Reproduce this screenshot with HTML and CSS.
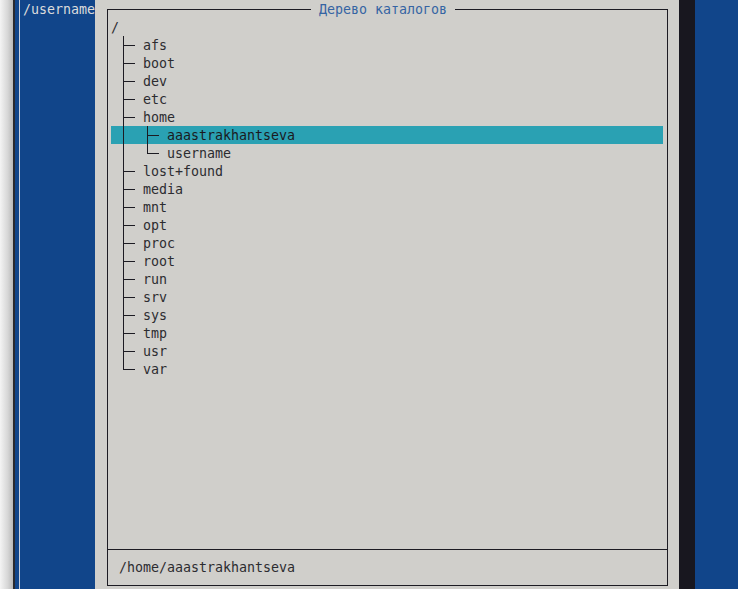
FILE: index.html
```html
<!DOCTYPE html>
<html lang="ru">
<head>
<meta charset="utf-8">
<title>Дерево каталогов</title>
<link rel="stylesheet" href="styles.css">
</head>
<body>
<div class="screen">
  <div class="edge"></div>
  <div class="edge-dark"></div>
  <div class="panel">
    <div class="panel-frame">/username</div>
  </div>
  <div class="dialog">
    <div class="box">
      <div class="title">Дерево каталогов</div>
      <div class="tree">
        <div class="row"><span class="name">/</span></div>
        <div class="row"><span class="c"></span><span class="c t"></span><span class="c h"></span><span class="c"></span><span class="name">afs</span></div>
        <div class="row"><span class="c"></span><span class="c t"></span><span class="c h"></span><span class="c"></span><span class="name">boot</span></div>
        <div class="row"><span class="c"></span><span class="c t"></span><span class="c h"></span><span class="c"></span><span class="name">dev</span></div>
        <div class="row"><span class="c"></span><span class="c t"></span><span class="c h"></span><span class="c"></span><span class="name">etc</span></div>
        <div class="row"><span class="c"></span><span class="c t"></span><span class="c h"></span><span class="c"></span><span class="name">home</span></div>
        <div class="row sel"><span class="c"></span><span class="c v"></span><span class="c"></span><span class="c"></span><span class="c t"></span><span class="c h"></span><span class="c"></span><span class="name">aaastrakhantseva</span></div>
        <div class="row"><span class="c"></span><span class="c v"></span><span class="c"></span><span class="c"></span><span class="c l"></span><span class="c h"></span><span class="c"></span><span class="name">username</span></div>
        <div class="row"><span class="c"></span><span class="c t"></span><span class="c h"></span><span class="c"></span><span class="name">lost+found</span></div>
        <div class="row"><span class="c"></span><span class="c t"></span><span class="c h"></span><span class="c"></span><span class="name">media</span></div>
        <div class="row"><span class="c"></span><span class="c t"></span><span class="c h"></span><span class="c"></span><span class="name">mnt</span></div>
        <div class="row"><span class="c"></span><span class="c t"></span><span class="c h"></span><span class="c"></span><span class="name">opt</span></div>
        <div class="row"><span class="c"></span><span class="c t"></span><span class="c h"></span><span class="c"></span><span class="name">proc</span></div>
        <div class="row"><span class="c"></span><span class="c t"></span><span class="c h"></span><span class="c"></span><span class="name">root</span></div>
        <div class="row"><span class="c"></span><span class="c t"></span><span class="c h"></span><span class="c"></span><span class="name">run</span></div>
        <div class="row"><span class="c"></span><span class="c t"></span><span class="c h"></span><span class="c"></span><span class="name">srv</span></div>
        <div class="row"><span class="c"></span><span class="c t"></span><span class="c h"></span><span class="c"></span><span class="name">sys</span></div>
        <div class="row"><span class="c"></span><span class="c t"></span><span class="c h"></span><span class="c"></span><span class="name">tmp</span></div>
        <div class="row"><span class="c"></span><span class="c t"></span><span class="c h"></span><span class="c"></span><span class="name">usr</span></div>
        <div class="row"><span class="c"></span><span class="c l"></span><span class="c h"></span><span class="c"></span><span class="name">var</span></div>
      </div>
      <div class="path">/home/aaastrakhantseva</div>
    </div>
  </div>
  <div class="shadow"></div>
  <div class="right-panel"></div>
</div>
</body>
</html>
```

FILE: styles.css
```css
html, body {
  margin: 0;
  padding: 0;
  background: #11458a;
}

.screen {
  display: flex;
  width: 738px;
  height: 589px;
  overflow: hidden;
  font-family: "DejaVu Sans Mono", "Liberation Mono", monospace;
  font-size: 13.3px;
  line-height: 18px;
}

.edge {
  width: 13px;
  flex: none;
  background: linear-gradient(to right, #f4f4f4, #d6d6d6 60%, #b8b8b8);
}

.edge-dark {
  width: 2px;
  flex: none;
  background: #2a2a2e;
}

.panel {
  width: 80px;
  flex: none;
  background: #11458a;
  padding-left: 4px;
  box-sizing: border-box;
  overflow: hidden;
}

.panel-frame {
  height: 100%;
  box-sizing: border-box;
  border-left: 1px solid #c9d0dc;
  padding: 1px 0 0 3px;
  color: #dcdcdc;
  white-space: nowrap;
}

.dialog {
  width: 584px;
  flex: none;
  background: #d0cfcb;
  padding: 9px 11px 3px 12px;
  box-sizing: border-box;
}

.box {
  position: relative;
  height: 100%;
  box-sizing: border-box;
  border: 1px solid #1c1b22;
  display: flex;
  flex-direction: column;
}

.title {
  position: absolute;
  top: -10px;
  left: 203px;
  padding: 2px 8px 0;
  line-height: 16px;
  background: #d0cfcb;
  color: #3564a3;
  white-space: pre;
}

.tree {
  flex: 1;
  padding: 8px 4px 0 3px;
  color: #2c2c30;
}

.row {
  display: flex;
  height: 18px;
  white-space: pre;
}

.name {
  padding-top: 2px;
  line-height: 16px;
}

.row.sel {
  background: #2aa1b3;
  color: #1a1a1e;
}

.c {
  width: 8px;
  height: 18px;
  flex: none;
  background-repeat: no-repeat;
}

.v {
  background-image: linear-gradient(#1c1b22, #1c1b22);
  background-position: 4px 0;
  background-size: 1px 18px;
}

.t {
  background-image: linear-gradient(#1c1b22, #1c1b22), linear-gradient(#1c1b22, #1c1b22);
  background-position: 4px 0, 4px 9px;
  background-size: 1px 18px, 4px 1px;
}

.l {
  background-image: linear-gradient(#1c1b22, #1c1b22), linear-gradient(#1c1b22, #1c1b22);
  background-position: 4px 0, 4px 9px;
  background-size: 1px 10px, 4px 1px;
}

.h {
  background-image: linear-gradient(#1c1b22, #1c1b22);
  background-position: 0 9px;
  background-size: 8px 1px;
}

.path {
  border-top: 1px solid #1c1b22;
  padding: 10px 0 7px 11px;
  height: 18px;
  line-height: 16px;
  color: #2c2c30;
  white-space: pre;
}

.shadow {
  width: 16px;
  flex: none;
  background: #18171f;
}

.right-panel {
  flex: 1;
  background: #11458a;
}
```
